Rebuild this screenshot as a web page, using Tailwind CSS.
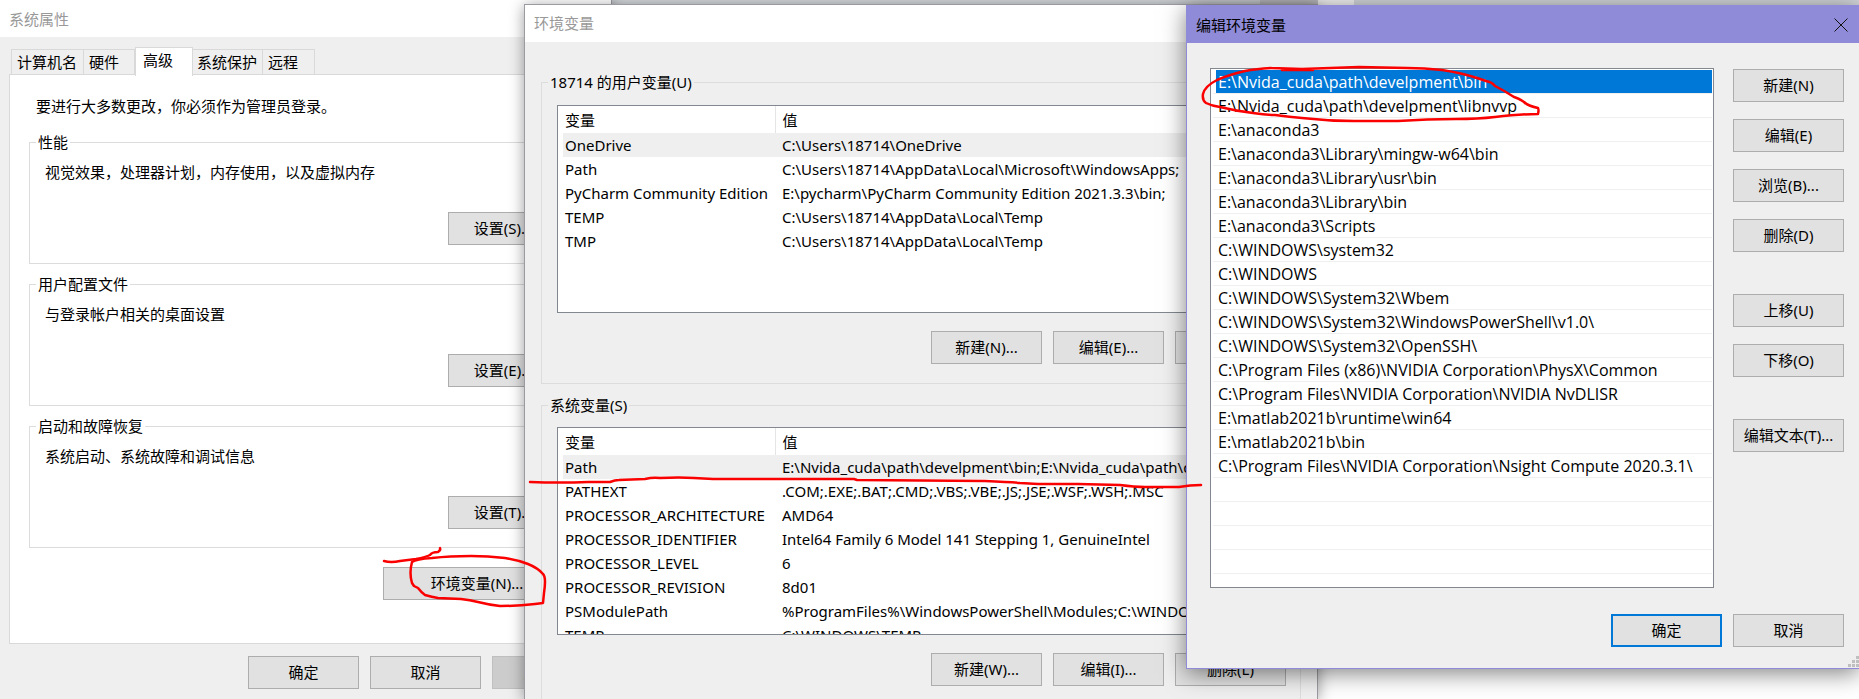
<!DOCTYPE html>
<html lang="zh-CN">
<head>
<meta charset="utf-8">
<title>环境变量</title>
<script src="https://cdn.jsdelivr.net/npm/@tailwindcss/browser@4"></script>
</head>
<body class="font-['Noto_Sans','Noto_Sans_CJK_SC',sans-serif] text-[15px] leading-5 text-black">
<main class="relative h-screen overflow-hidden bg-white">
  <!-- Strip of the application behind the dialogs -->
  <div class="flex h-3 bg-[#d3d6da]">
    <div class="w-[1260px]"></div>
    <div class="w-[58px] bg-[#c2c2c6]"></div>
    <div class="w-9 bg-[#f2f2f2]"></div>
  </div>

  <!-- System properties -->
  <section class="absolute top-0 bottom-0 left-0 flex w-[612px] flex-col border-r border-[#9a9aa0] bg-[#efefef] shadow-[0_0_12px_rgba(0,0,0,0.35)]">
    <header class="flex h-[37px] items-center bg-white pl-[9px] text-[#999]">系统属性</header>
    <div class="mt-[10px] flex h-7 items-end pl-[11px]" role="tablist">
      <button role="tab" class="h-[26px] w-[73px] border border-[#d9d9d9] pl-[5px] text-left">计算机名</button>
      <button role="tab" class="-ml-px h-[26px] w-[52px] border border-[#d9d9d9] pl-[5px] text-left">硬件</button>
      <button role="tab" aria-selected="true" class="relative -mr-px -mb-px h-[29px] w-[58px] border border-b-0 border-[#d9d9d9] bg-white pb-1 pl-[7px] text-left">高级</button>
      <button role="tab" class="h-[26px] w-[71px] border border-[#d9d9d9] pl-1 text-left">系统保护</button>
      <button role="tab" class="-ml-px h-[26px] w-[53px] border border-[#d9d9d9] pl-[5px] text-left">远程</button>
    </div>
    <div class="-mt-px mr-3 ml-[9px] flex h-[570px] flex-col border border-[#d9d9d9] bg-white pr-[27px] pl-[19px]">
      <p class="mt-[21px] pl-[7px]">要进行大多数更改，你必须作为管理员登录。</p>
      <div class="mt-4 flex flex-col gap-[10px]">
        <fieldset class="flex h-[132px] flex-col border border-[#dcdcdc] px-[6px]">
          <legend class="px-[2px]">性能</legend>
          <p class="mt-[10px] pl-[9px]">视觉效果，处理器计划，内存使用，以及虚拟内存</p>
          <button class="mt-[30px] mr-[5px] h-[33px] w-[111px] shrink-0 self-end border border-[#adadad] bg-[#e1e1e1] pb-[2px]">设置(S)...</button>
        </fieldset>
        <fieldset class="flex h-[132px] flex-col border border-[#dcdcdc] px-[6px]">
          <legend class="px-[2px]">用户配置文件</legend>
          <p class="mt-[10px] pl-[9px]">与登录帐户相关的桌面设置</p>
          <button class="mt-[30px] mr-[5px] h-[33px] w-[111px] shrink-0 self-end border border-[#adadad] bg-[#e1e1e1] pb-[2px]">设置(E)...</button>
        </fieldset>
        <fieldset class="flex h-[132px] flex-col border border-[#dcdcdc] px-[6px]">
          <legend class="px-[2px]">启动和故障恢复</legend>
          <p class="mt-[10px] pl-[9px]">系统启动、系统故障和调试信息</p>
          <button class="mt-[30px] mr-[5px] h-[33px] w-[111px] shrink-0 self-end border border-[#adadad] bg-[#e1e1e1] pb-[2px]">设置(T)...</button>
        </fieldset>
      </div>
      <button class="mt-[19px] h-[33px] w-[188px] shrink-0 self-end border border-[#adadad] bg-[#e1e1e1] pb-[2px]">环境变量(N)...</button>
    </div>
    <footer class="mt-3 flex gap-[11px] pl-[248px]">
      <button class="h-[33px] w-[111px] border border-[#adadad] bg-[#e1e1e1] pb-[2px]">确定</button>
      <button class="h-[33px] w-[111px] border border-[#adadad] bg-[#e1e1e1] pb-[2px]">取消</button>
      <button disabled class="h-[33px] w-[111px] border border-[#bfbfbf] bg-[#ccc] pb-[2px] text-[#838383]">应用(A)</button>
    </footer>
  </section>

  <!-- Environment variables -->
  <section class="absolute top-1 bottom-0 left-[524px] flex w-[794px] flex-col border border-b-0 border-[#9a9aa0] bg-[#efefef] shadow-[0_2px_14px_rgba(0,0,0,0.4)]">
    <header class="flex h-[37px] shrink-0 items-center bg-white pb-px pl-[9px] text-[#999]">环境变量</header>
    <div class="mt-[30px] mr-4 ml-4 flex shrink-0 flex-col gap-[11px]">
      <fieldset class="h-[312px] border border-[#dcdcdc] px-[6px]">
        <legend class="px-[2px]">18714 的用户变量(U)</legend>
        <div class="mt-[13px] mr-2 ml-[9px] h-[208px] overflow-hidden border border-[#828790] bg-white pl-[5px] whitespace-nowrap">
          <table class="w-full table-fixed text-left">
            <colgroup><col class="w-[212px]"><col></colgroup>
            <thead><tr class="h-[27px]"><th class="border-r border-[#e5e5e5] pl-[2px] font-normal">变量</th><th class="pl-[7px] font-normal">值</th></tr></thead>
            <tbody>
              <tr class="h-6 bg-[#efefef]"><td class="pl-[2px]">OneDrive</td><td class="pl-[7px]">C:\Users\18714\OneDrive</td></tr>
              <tr class="h-6"><td class="pl-[2px]">Path</td><td class="pl-[7px]">C:\Users\18714\AppData\Local\Microsoft\WindowsApps;</td></tr>
              <tr class="h-6"><td class="pl-[2px]">PyCharm Community Edition</td><td class="pl-[7px]">E:\pycharm\PyCharm Community Edition 2021.3.3\bin;</td></tr>
              <tr class="h-6"><td class="pl-[2px]">TEMP</td><td class="pl-[7px]">C:\Users\18714\AppData\Local\Temp</td></tr>
              <tr class="h-6"><td class="pl-[2px]">TMP</td><td class="pl-[7px]">C:\Users\18714\AppData\Local\Temp</td></tr>
            </tbody>
          </table>
        </div>
        <div class="mt-[18px] mr-2 flex justify-end gap-[11px]">
          <button class="h-[33px] w-[111px] border border-[#adadad] bg-[#e1e1e1] pb-[2px]">新建(N)...</button>
          <button class="h-[33px] w-[111px] border border-[#adadad] bg-[#e1e1e1] pb-[2px]">编辑(E)...</button>
          <button class="h-[33px] w-[111px] border border-[#adadad] bg-[#e1e1e1] pb-[2px]">删除(D)</button>
        </div>
      </fieldset>
      <fieldset class="h-[312px] border border-[#dcdcdc] px-[6px]">
        <legend class="px-[2px]">系统变量(S)</legend>
        <div class="mt-[12px] mr-2 ml-[9px] h-[208px] overflow-hidden border border-[#828790] bg-white pl-[5px] whitespace-nowrap">
          <table class="w-full table-fixed text-left">
            <colgroup><col class="w-[212px]"><col></colgroup>
            <thead><tr class="h-[27px]"><th class="border-r border-[#e5e5e5] pl-[2px] font-normal">变量</th><th class="pl-[7px] font-normal">值</th></tr></thead>
            <tbody>
              <tr class="h-6 bg-[#efefef]"><td class="pl-[2px]">Path</td><td class="pl-[7px]">E:\Nvida_cuda\path\develpment\bin;E:\Nvida_cuda\path\develpment\libnvvp</td></tr>
              <tr class="h-6"><td class="pl-[2px]">PATHEXT</td><td class="pl-[7px]">.COM;.EXE;.BAT;.CMD;.VBS;.VBE;.JS;.JSE;.WSF;.WSH;.MSC</td></tr>
              <tr class="h-6"><td class="pl-[2px]">PROCESSOR_ARCHITECTURE</td><td class="pl-[7px]">AMD64</td></tr>
              <tr class="h-6"><td class="pl-[2px]">PROCESSOR_IDENTIFIER</td><td class="pl-[7px]">Intel64 Family 6 Model 141 Stepping 1, GenuineIntel</td></tr>
              <tr class="h-6"><td class="pl-[2px]">PROCESSOR_LEVEL</td><td class="pl-[7px]">6</td></tr>
              <tr class="h-6"><td class="pl-[2px]">PROCESSOR_REVISION</td><td class="pl-[7px]">8d01</td></tr>
              <tr class="h-6"><td class="pl-[2px]">PSModulePath</td><td class="pl-[7px]">%ProgramFiles%\WindowsPowerShell\Modules;C:\WINDOWS</td></tr>
              <tr class="h-6"><td class="pl-[2px]">TEMP</td><td class="pl-[7px]">C:\WINDOWS\TEMP</td></tr>
            </tbody>
          </table>
        </div>
        <div class="mt-[18px] mr-2 flex justify-end gap-[11px]">
          <button class="h-[33px] w-[111px] border border-[#adadad] bg-[#e1e1e1] pb-[2px]">新建(W)...</button>
          <button class="h-[33px] w-[111px] border border-[#adadad] bg-[#e1e1e1] pb-[2px]">编辑(I)...</button>
          <button class="h-[33px] w-[111px] border border-[#adadad] bg-[#e1e1e1] pb-[2px]">删除(L)</button>
        </div>
      </fieldset>
    </div>
  </section>

  <!-- Edit environment variable -->
  <section class="absolute top-[5px] right-0 left-[1186px] flex flex-col border border-r-0 border-[#8f8bd8] bg-[#efefef] shadow-[0_4px_22px_rgba(0,0,0,0.5)]">
    <header class="flex h-[37px] items-center justify-between bg-[#8f8bd8] pr-[11px] pl-[9px]">
      <span>编辑环境变量</span>
      <button aria-label="关闭"><svg class="size-[14px]" viewBox="0 0 14 14" fill="none" stroke="#111"><path d="M.5.5l13 13M13.5.5l-13 13"/></svg></button>
    </header>
    <div class="mt-[25px] mr-[15px] ml-[23px] flex gap-[19px]">
      <ul class="h-[520px] flex-1 overflow-hidden border border-[#828790] bg-white pt-px pr-px pl-[2px] font-['Open_Sans',sans-serif] text-base whitespace-nowrap">
        <li class="h-6 border-b border-[#efefef] pl-[3px]"><div class="h-[23px] bg-[#0078d7] pl-[2px] leading-6 text-white">E:\Nvida_cuda\path\develpment\bin</div></li>
        <li class="h-6 border-b border-[#efefef] pl-[5px] leading-6">E:\Nvida_cuda\path\develpment\libnvvp</li>
        <li class="h-6 border-b border-[#efefef] pl-[5px] leading-6">E:\anaconda3</li>
        <li class="h-6 border-b border-[#efefef] pl-[5px] leading-6">E:\anaconda3\Library\mingw-w64\bin</li>
        <li class="h-6 border-b border-[#efefef] pl-[5px] leading-6">E:\anaconda3\Library\usr\bin</li>
        <li class="h-6 border-b border-[#efefef] pl-[5px] leading-6">E:\anaconda3\Library\bin</li>
        <li class="h-6 border-b border-[#efefef] pl-[5px] leading-6">E:\anaconda3\Scripts</li>
        <li class="h-6 border-b border-[#efefef] pl-[5px] leading-6">C:\WINDOWS\system32</li>
        <li class="h-6 border-b border-[#efefef] pl-[5px] leading-6">C:\WINDOWS</li>
        <li class="h-6 border-b border-[#efefef] pl-[5px] leading-6">C:\WINDOWS\System32\Wbem</li>
        <li class="h-6 border-b border-[#efefef] pl-[5px] leading-6">C:\WINDOWS\System32\WindowsPowerShell\v1.0\</li>
        <li class="h-6 border-b border-[#efefef] pl-[5px] leading-6">C:\WINDOWS\System32\OpenSSH\</li>
        <li class="h-6 border-b border-[#efefef] pl-[5px] leading-6">C:\Program Files (x86)\NVIDIA Corporation\PhysX\Common</li>
        <li class="h-6 border-b border-[#efefef] pl-[5px] leading-6">C:\Program Files\NVIDIA Corporation\NVIDIA NvDLISR</li>
        <li class="h-6 border-b border-[#efefef] pl-[5px] leading-6">E:\matlab2021b\runtime\win64</li>
        <li class="h-6 border-b border-[#efefef] pl-[5px] leading-6">E:\matlab2021b\bin</li>
        <li class="h-6 border-b border-[#efefef] pl-[5px] leading-6">C:\Program Files\NVIDIA Corporation\Nsight Compute 2020.3.1\</li>
        <li class="h-6 border-b border-[#efefef]"></li>
        <li class="h-6 border-b border-[#efefef]"></li>
        <li class="h-6 border-b border-[#efefef]"></li>
        <li class="h-6 border-b border-[#efefef]"></li>
      </ul>
      <div class="mt-px flex w-[111px] flex-col gap-[17px]">
        <button class="h-[33px] border border-[#adadad] bg-[#e1e1e1] pb-[2px]">新建(N)</button>
        <button class="h-[33px] border border-[#adadad] bg-[#e1e1e1] pb-[2px]">编辑(E)</button>
        <button class="h-[33px] border border-[#adadad] bg-[#e1e1e1] pb-[2px]">浏览(B)...</button>
        <button class="h-[33px] border border-[#adadad] bg-[#e1e1e1] pb-[2px]">删除(D)</button>
        <button class="mt-[25px] h-[33px] border border-[#adadad] bg-[#e1e1e1] pb-[2px]">上移(U)</button>
        <button class="h-[33px] border border-[#adadad] bg-[#e1e1e1] pb-[2px]">下移(O)</button>
        <button class="mt-[25px] h-[33px] border border-[#adadad] bg-[#e1e1e1] pb-[2px]">编辑文本(T)...</button>
      </div>
    </div>
    <footer class="mt-[26px] mr-[15px] flex justify-end gap-[11px]">
      <button class="h-[33px] w-[111px] border-2 border-[#0078d7] bg-[#e1e1e1] pb-[2px]">确定</button>
      <button class="h-[33px] w-[111px] border border-[#adadad] bg-[#e1e1e1] pb-[2px]">取消</button>
    </footer>
    <svg class="mt-[9px] mb-px h-[11px] w-[11px] self-end" viewBox="0 0 11 11" fill="#bfbfbf"><path d="M8 0h3v3H8zM4 4h3v3H4zM8 4h3v3H8zM0 8h3v3H0zM4 8h3v3H4zM8 8h3v3H8z"/></svg>
  </section>

  <!-- Hand-drawn red marks -->
  <svg class="pointer-events-none absolute top-0 left-0 h-full w-full" fill="none" stroke="#fb0000" stroke-width="2.5" stroke-linecap="round" stroke-linejoin="round">
    <path d="M384 561Q391 563 400 561L416 559Q426 557 430 555Q432 552 438 552Q441 550 440 548"/>
    <path d="M412 562Q409 573 412 583L414 586L418 588Q421 592 425 595Q432 597 438 598L461 599Q470 600 478 602Q490 605 500 606Q518 606 535 604L543 603L544 593Q545 586 545 582Q545 576 543 574Q538 568 528 564Q518 560 505 558Q488 556 471 556Q450 556 432 558Q416 559 412 562"/>
    <path d="M530 482Q560 483 588 482L610 482Q615 480 619 480L645 479Q653 477 660 478Q680 477 694 478L713 479L854 479L857 480L985 481Q1010 482 1020 483L1038 484L1078 484L1120 485Q1135 487 1145 487L1179 487Q1190 485 1201 485"/>
    <path d="M1271 68Q1256 69 1245 71Q1228 75 1217 80Q1205 86 1203 94Q1202 100 1206 103Q1212 106 1220 107Q1236 111 1253 113Q1265 115 1275 115Q1290 117 1302 118Q1328 121 1354 121L1398 121Q1428 119 1456 119Q1478 119 1495 117Q1520 114 1538 114Q1539 110 1538 108Q1528 106 1524 102Q1518 98 1514 97Q1505 91 1495 86Q1492 82 1486 81Q1480 79 1477 78Q1462 73 1442 70Q1424 68 1407 68L1359 67L1302 69L1271 68M1282 70H1313"/>
  </svg>
</main>
</body>
</html>
